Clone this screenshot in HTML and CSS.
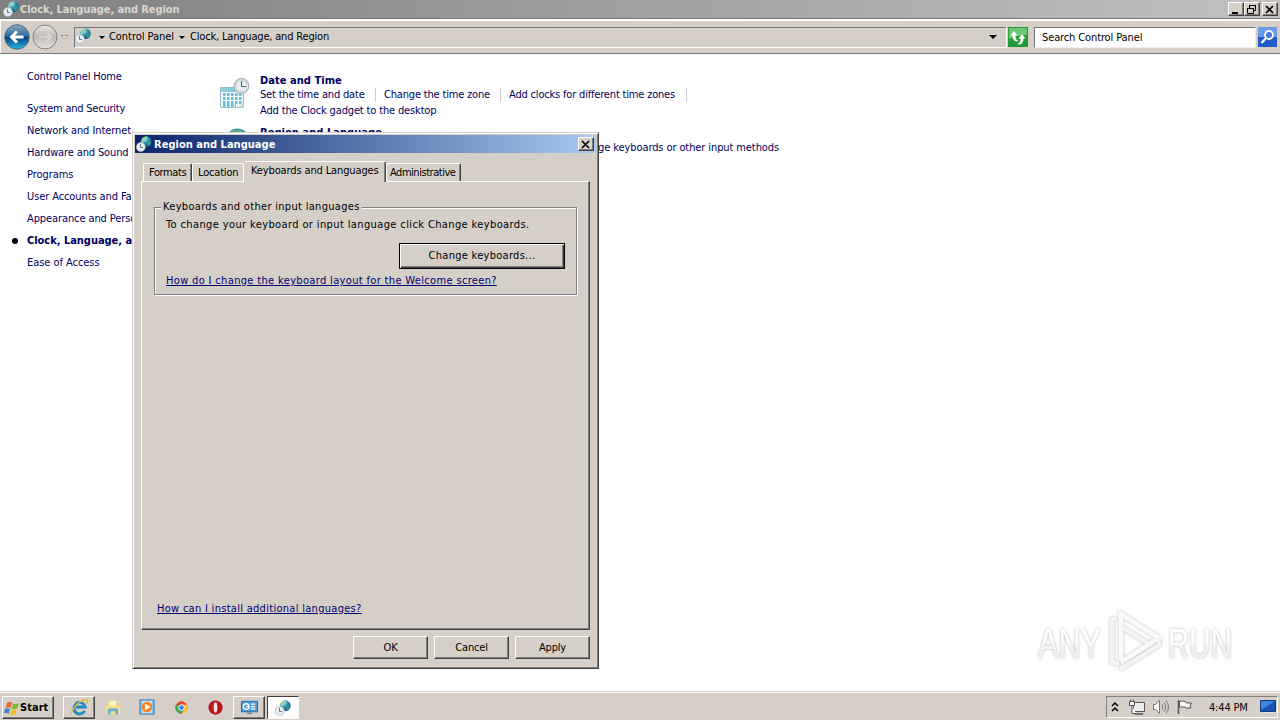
FILE: index.html
```html
<!DOCTYPE html>
<html lang="en">
<head>
<meta charset="utf-8">
<title>Clock, Language, and Region</title>
<link rel="stylesheet" href="styles.css">
</head>
<body>
<svg class="defs" width="0" height="0">
  <defs>
    <radialGradient id="ocean" cx=".35" cy=".25" r=".8"><stop offset="0" stop-color="#c8f4f4"/><stop offset=".4" stop-color="#3a9bc0"/><stop offset="1" stop-color="#07447c"/></radialGradient>
    <linearGradient id="blueOrb" x2="0" y2="1"><stop offset="0" stop-color="#8aa9bd"/><stop offset=".45" stop-color="#2a6ea4"/><stop offset=".52" stop-color="#06437d"/><stop offset="1" stop-color="#28b8ee"/></linearGradient>
    <linearGradient id="grayOrb" x2="0" y2="1"><stop offset="0" stop-color="#e9e7e4"/><stop offset=".5" stop-color="#bdbab6"/><stop offset="1" stop-color="#e6e4e0"/></linearGradient>
    <symbol id="globe" viewBox="0 0 16 16">
      <circle cx="10.300" cy="5.700" r="5.400" fill="url(#ocean)"/>
      <path d="M5.500 3.500Q7.500 0 11 .6L10.500 3 8.500 4 7 7 5.200 6.500z" fill="#8fd6a4"/><path d="M12 5l3 .5-.5 3-2 2-1.500-3z" fill="#2f9a86"/>
      <circle cx="4.800" cy="11" r="4.500" fill="#e9eef2" stroke="#a4b1bc" stroke-width=".7"/>
      <path d="M4.500 8v3.500H7" fill="none" stroke="#53697b" stroke-width=".9"/>
    </symbol>
  </defs>
</svg>
<div class="desktop">
  <header class="titlebar">
    <svg class="ico16" viewBox="0 0 16 16"><use href="#globe"/></svg>
    <span class="caption">Clock, Language, and Region</span>
    <div class="winbtns">
      <button class="wb"><svg viewBox="0 0 13 11"><path d="M3 8h6v2H3z"/></svg></button>
      <button class="wb"><svg viewBox="0 0 13 11"><path d="M4.500 4V1.500h6v5H8.500M4 1.500h7M2.500 4.500h6v5h-6zM2 4.500h7" fill="none" stroke="#000"/></svg></button>
      <button class="wb gap"><svg viewBox="0 0 13 11"><path d="M3 2l7 7M10 2L3 9" stroke="#000" stroke-width="1.700"/></svg></button>
    </div>
  </header>
  <nav class="toolbar">
    <svg class="orbs" viewBox="0 0 68 30">
      <circle cx="14" cy="15" r="12.300" fill="url(#blueOrb)" stroke="#576c7b"/>
      <path d="M20.500 15H9M14 9.500L8.500 15l5.500 5.500" fill="none" stroke="#fff" stroke-width="3"/>
      <circle cx="42" cy="15" r="12" fill="url(#grayOrb)" stroke="#85827e"/>
      <path d="M36 15h12M43.500 10.500L48 15l-4.500 4.500" fill="none" stroke="#d8d5d1" stroke-width="2"/>
      <path d="M58 13.500h7L61.500 17z" fill="#eee" stroke="#858079" stroke-width=".8"/>
    </svg>
    <div class="address">
      <svg class="ico16" viewBox="0 0 16 16"><use href="#globe"/></svg>
      <i class="arrow a1"></i><span class="crumb c1">Control Panel</span>
      <i class="arrow a2"></i><span class="crumb c2">Clock, Language, and Region</span>
      <i class="arrow big"></i>
    </div>
    <svg class="refresh" viewBox="0 0 20 20"><path d="M0 0h20v20H0z" fill="#25983a"/><path d="M1 1h18v7Q10 8 1 12z" fill="#6bc676"/><path d="M2.500 10.500L6 15l3.500-4.500H7.500C7.500 7 8.500 5.500 11 5 7 3.500 4.500 6 4.500 10.500z" transform="matrix(1 0 0 -1 0 19)" fill="#fff"/><path d="M17.500 9.500L14 5l-3.500 4.500h2c0 3.500-1 5-3.500 5.500 4 1.500 6.500-1 6.500-5.500z" transform="translate(0 2)" fill="#fff"/></svg>
    <div class="search">Search Control Panel</div>
    <svg class="mag" viewBox="0 0 19 20"><path d="M0 0h19v20H0z" fill="#245bc9"/><path d="M0 0h19v10H0z" fill="#6d9be9"/><circle cx="11" cy="8" r="4" fill="#467bdc" stroke="#fff" stroke-width="1.800"/><path d="M8 11l-4.500 5" stroke="#fff" stroke-width="2.200"/></svg>
  </nav>
  <main class="content">
    <aside class="side">
      <a class="s1">Control Panel Home</a>
      <ul>
        <li class="s2">System and Security</li><li class="s3">Network and Internet</li><li class="s4">Hardware and Sound</li><li class="s8">Programs</li><li class="s5">User Accounts and Family Safety</li><li class="s6">Appearance and Personalization</li><li class="cur">Clock, Language, and Region</li><li class="s7">Ease of Access</li>
      </ul>
    </aside>
    <section class="groups">
      <div class="group">
        <svg class="ico32" viewBox="0 0 32 32">
          <path d="M1.500 9.500h23v20h-23z" fill="#f2fafc" stroke="#8dbdcc"/><path d="M2 10h22v4H2z" fill="#8acce2"/>
          <path d="M4 16.500h19M4 20.500h19M4 24.500h19M4 27.500h13" stroke="#5ab0d0" stroke-width="2.300" stroke-dasharray="2.600 1.400"/>
          <path d="M19 29.500l5.500-5v5z" fill="#c8dfe5"/>
          <circle cx="22.500" cy="8" r="7.300" fill="#e8edef" stroke="#a5afb5" stroke-width="1.200"/><circle cx="22.500" cy="8" r="5.500" fill="none" stroke="#c3cdd1" stroke-width=".8"/><path d="M22.500 3v5.500h4.500" fill="none" stroke="#5b6b75" stroke-width="1.100"/>
        </svg>
        <div class="tasks">
          <h2 class="h1">Date and Time</h2>
          <p><a class="t1">Set the time and date</a><a class="t2">Change the time zone</a><a class="t3">Add clocks for different time zones</a></p>
          <p class="row2"><span class="t4">Add the Clock gadget to the desktop</span></p>
        </div>
      </div>
      <div class="group second">
        <svg class="ico32" viewBox="0 0 32 32"><circle cx="18.500" cy="12" r="11.500" fill="#3a93ac"/><path d="M10 5Q17-1 24 3l-5 5-7 1z" fill="#5fae80"/></svg>
        <div class="tasks">
          <h2 class="h2">Region and Language</h2>
          <p class="right"><span class="t5">Change keyboards or other input methods</span></p>
        </div>
      </div>
    </section>
  </main>
  <svg class="watermark" viewBox="0 0 210 70">
    <defs><filter id="soft" x="-.1" y="-.1" width="1.200" height="1.200"><feDropShadow dx="0" dy="0" stdDeviation="1.600" flood-color="#777" flood-opacity=".55"/></filter><linearGradient id="mark" x2="0" y2="1"><stop offset=".45" stop-color="#fff"/><stop offset=".65" stop-color="#f0f0f0"/></linearGradient></defs>
    <g filter="url(#soft)">
      <g class="marktext" fill="url(#mark)"><text x="8" y="53" textLength="63" lengthAdjust="spacingAndGlyphs">ANY</text><text x="138" y="53" textLength="64" lengthAdjust="spacingAndGlyphs">RUN</text></g>
      <path d="M91 55V9l38 24-38 24" fill="none" stroke="#fafafa" stroke-width="4.500"/><path d="M91 22l27 16M86 14h-4v43l7 2M90 64l39-24v-7" fill="none" stroke="#f4f4f4" stroke-width="4"/>
    </g>
  </svg>
  <section class="dialog">
    <div class="dtitle"><svg class="ico16" viewBox="0 0 16 16"><use href="#globe"/></svg><span>Region and Language</span><button class="wb"><svg viewBox="0 0 13 11"><path d="M3 2l7 7M10 2L3 9" stroke="#000" stroke-width="1.700"/></svg></button></div>
    <div class="tabs"><div class="tab f"><span>Formats</span></div><div class="tab l"><span>Location</span></div><div class="tab on"><span>Keyboards and Languages</span></div><div class="tab ad"><span>Administrative</span></div></div>
    <div class="panel">
      <fieldset>
        <legend><span>Keyboards and other input languages</span></legend>
        <p class="d1">To change your keyboard or input language click Change keyboards.</p>
        <button class="btn default"><span>Change keyboards...</span></button>
        <a class="link d2">How do I change the keyboard layout for the Welcome screen?</a>
      </fieldset>
      <a class="link d3">How can I install additional languages?</a>
    </div>
    <div class="actions"><button class="btn">OK</button><button class="btn">Cancel</button><button class="btn">Apply</button></div>
  </section>
  <footer class="taskbar">
    <button class="start"><svg viewBox="0 0 17 16"><path d="M4 3q3-2 5 0L7.500 8q-2-1.500-5 0z" fill="#ed6634"/><path d="M10 3.500q3 1.500 6-.5L14.500 8q-3 2-6 .5z" fill="#79b83a"/><path d="M2 9q3-1.500 5 0L5.700 14Q3 12 .5 13.500z" fill="#3e85c8"/><path d="M8 9.500q3 1.500 6-.5l-1.500 5q-3 2-6 .5z" fill="#f4bd2f"/></svg><span>Start</span></button>
    <div class="apps">
      <div class="app raised"><svg viewBox="0 0 20 20"><path d="M15.500 13.500A6 6 0 1 1 16 9.500H6" fill="none" stroke="#238ac9" stroke-width="3"/><path d="M2 17C-1 14 12 0 18 2c2 1-1 4-1 4" fill="none" stroke="#e8b83a" stroke-width="1.500"/></svg></div>
      <div class="app"><svg viewBox="0 0 20 20"><path d="M3 4h6l1 2h6v11H3z" fill="#efcf65"/><path d="M5 3h8v6H5z" fill="#f8f2c2"/><path d="M2 8h15v9H2z" fill="#f5df8b"/><path d="M4 17v-4q0-2 2-2h7q2 0 2 2v4h-3v-3H7v3z" fill="#67aed5"/></svg></div>
      <div class="app"><svg viewBox="0 0 20 20"><path d="M2 2h15v15H2z" fill="#75b6e6" stroke="#3d83bd"/><path d="M4 3h11v13H4z" fill="#c9e4f5"/><circle cx="9.500" cy="9.500" r="5.500" fill="#f1841d"/><path d="M7.500 6l6 3.500-6 3.500z" fill="#fff"/></svg></div>
      <div class="app"><svg viewBox="0 0 20 20"><circle cx="10" cy="10" r="6.500" fill="#e34335"/><path d="M10 10L4.400 6.700A6.500 6.500 0 0 0 10 16.500l3-5z" fill="#3ba854"/><path d="M10 7h5.800A6.500 6.500 0 0 1 10 16.500l3-5z" fill="#fac52c"/><circle cx="10" cy="10" r="3" fill="#4384df" stroke="#fff"/></svg></div>
      <div class="app"><svg viewBox="0 0 20 20"><circle cx="10" cy="10" r="7.500" fill="#b9131b"/><ellipse cx="10" cy="10" rx="2" ry="5.500" fill="#f5dedc"/></svg></div>
      <div class="app raised"><svg viewBox="0 0 20 20"><path d="M1.500 3.500h17v11h-17z" fill="#4e9bd3" stroke="#246b9e"/><circle cx="6.500" cy="9" r="3" fill="none" stroke="#fff" stroke-width="1.500"/><path d="M6.500 9h3M11.500 6.500H16M11.500 9H16M11.500 11.500H16" stroke="#fff" stroke-width="1.300"/><path d="M7 15h6v2H7z" fill="#7197b0"/></svg></div>
      <div class="app active"><svg viewBox="0 0 16 16"><use href="#globe"/></svg></div>
    </div>
    <div class="tray">
      <svg class="trayicons" viewBox="0 0 90 20">
        <path d="M5 9l3-3 3 3M5 14l3-3 3 3" fill="none" stroke="#000" stroke-width="1.500"/>
        <g stroke="#555" fill="#eee"><path d="M26.500 5.500h11v9h-11z"/><path d="M28 17h8" stroke-width="1.500"/><path d="M22.500 4.500h5v4h-5zM25 8.500v8h4M23.500 2.500v2m3-2v2" fill="#fff"/></g>
        <g stroke="#777" fill="#f7f7f7"><path d="M46.500 7.500h2l4-4v13l-4-4h-2z"/><path d="M55 7.500q2 2.500 0 5M57 5.500q3.500 4.500 0 9M59 3.500q5 6.500 0 13" fill="none"/></g>
        <g stroke="#555"><path d="M71.500 3v14" stroke-width="1.500"/><path d="M72.500 4.500q3-1 6 0l1 1.500h5l-1.500 3 1 2h-5l-1-1h-5.500z" fill="#f5f5f5"/></g>
      </svg>
      <span class="clock">4:44 PM</span>
      <svg class="show" viewBox="0 0 16 14"><path d="M.5.500h15v11H.5z" fill="#1752b5" stroke="#123b73"/><path d="M1 1h14L1 10z" fill="#3d86dc"/><path d="M3 12.500h10" stroke="#dfe7f0"/></svg>
    </div>
  </footer>
</div>
</body>
</html>
```
FILE: styles.css
```css
* { box-sizing: border-box; }
body { margin: 0; font: 11px/14px "DejaVu Sans Condensed", "DejaVu Sans", sans-serif; letter-spacing: -.18px; color: #000; overflow: hidden; }
button { font: inherit; letter-spacing: inherit; color: #000; padding: 0; margin: 0; }
p, h2, ul { margin: 0; padding: 0; list-style: none; }
span, a, li { white-space: nowrap; }
svg { display: block; flex: none; }
.defs { position: absolute; }
.desktop { width: 1280px; height: 720px; display: flex; flex-direction: column; background: #fff; position: relative; overflow: hidden; }
.ico16 { width: 16px; height: 16px; }
.titlebar { height: 18px; display: flex; align-items: center; background: linear-gradient(90deg, #808080, #c1c1c1); padding: 0 2px 0 3px; flex: none; }
.caption { color: #d9d5ce; font-weight: bold; padding: 1px 0 0 1px; letter-spacing: -.09px; }
.winbtns { margin-left: auto; display: flex; }
.wb { width: 16px; height: 14px; background: #d6cfc8; border: 1px solid; border-color: #fff #404040 #404040 #fff; box-shadow: inset -1px -1px #808080; }
.wb svg { width: 13px; height: 11px; }
.wb.gap { margin-left: 2px; }
.toolbar { height: 36px; flex: none; display: flex; align-items: center; background: #d6cfc8; border-top: 1px solid #777; border-bottom: 1px solid #777; box-shadow: inset 1px 2px #fff; padding: 2px 1px 0 3px; }
.orbs { width: 68px; height: 30px; }
.address { width: 933px; height: 21px; margin-left: 3px; border: 1px solid #fff; border-top-color: #777; border-left-color: #777; display: flex; align-items: center; }
.address .ico16 { margin-bottom: 3px; }
.arrow { border: 3px solid transparent; border-top-color: #000; border-bottom: 0; }
.a1 { margin-left: 8px; }
.c1 { margin-left: 4px; width: 65px; letter-spacing: -.05px; }
.a2 { margin-left: 5px; }
.c2 { margin-left: 5px; }
.arrow.big { border-width: 4px 4px 0; margin-left: auto; margin-right: 9px; }
.refresh { width: 20px; height: 20px; margin-left: 1px; }
.search { width: 222px; height: 21px; margin: 0 1px 0 6px; background: #fff; border: 1px solid #777; border-right-color: #eee; border-bottom-color: #eee; padding: 3px 7px; letter-spacing: -.12px; }
.mag { width: 19px; height: 20px; margin-left: 1px; }
.content { flex: 1; display: flex; color: #000060; }
.side { width: 220px; padding: 16px 0 0 27px; }
.side ul { padding-top: 18px; }
.side li { height: 22px; }
.s2 { letter-spacing: -.23px; } .s3 { letter-spacing: -.07px; } .s4 { letter-spacing: -.13px; }
.s5, .s6 { letter-spacing: -.1px; } .s7, .s8 { letter-spacing: -.05px; }
.side .cur { font-weight: bold; position: relative; letter-spacing: -.03px; }
.cur::before { content: ""; position: absolute; left: -15px; top: 4px; width: 6px; height: 6px; border-radius: 50%; background: #000; }
.groups { padding-top: 20px; }
.group { display: flex; height: 52px; }
.ico32 { width: 32px; height: 32px; margin: 4px 8px 0 -1px; }
.second .ico32 { margin-top: 2px; }
.tasks { padding-left: 1px; }
h2 { font-size: 11px; line-height: 14px; letter-spacing: .05px; }
.tasks p { height: 16px; display: flex; }
.tasks p a { border-right: 1px solid #ccc; padding-right: 11px; margin-right: 8px; height: 14px; }
.t1 { width: 116px; } .t2 { width: 117px; } .t3 { width: 178px; } .t4 { letter-spacing: -.15px; }
.right { width: 519px; justify-content: flex-end; padding-top: 1px; }
.t5 { letter-spacing: -.1px; }
.watermark { position: absolute; left: 1030px; top: 605px; width: 210px; height: 70px; overflow: visible; }
.marktext { font: 43px "Liberation Sans", sans-serif; letter-spacing: 0; }
.dialog { position: absolute; left: 132px; top: 132px; width: 467px; height: 537px; background: #d6cfc8; border: 1px solid; border-color: #d6cfc8 #404040 #404040 #d6cfc8; box-shadow: inset 1px 1px #fff, inset -1px -1px #808080; padding: 2px; }
.dtitle { height: 18px; display: flex; align-items: center; background: linear-gradient(90deg, #0a246a, #a6caf0); color: #fff; font-weight: bold; padding: 0 2px 0 1px; }
.dtitle span { padding: 1px 0 0 2px; letter-spacing: .02px; }
.dtitle .wb { margin-left: auto; }
.tabs { height: 28px; padding: 8px 0 0 8px; display: flex; align-items: flex-end; }
.tab { height: 18px; border: 1px solid #fff; border-right-color: #404040; border-bottom: 0; box-shadow: inset -1px 0 #808080; padding: 2px 0 0 5px; border-radius: 2px 2px 0 0; }
.f { width: 49px; letter-spacing: -.4px; } .l { width: 52px; border-right-color: #fff; box-shadow: none; } .ad { width: 75px; padding-left: 3px; letter-spacing: -.47px; }
.tab.on { width: 142px; height: 21px; padding: 2px 0 0 6px; margin-bottom: -1px; background: #d6cfc8; position: relative; border-left-color: #d6cfc8; letter-spacing: -.13px; }
.panel { height: 449px; width: 449px; margin-left: 6px; border: 1px solid; border-color: #fff #404040 #404040 #fff; box-shadow: inset -1px -1px #808080; padding: 18px 12px 13px; display: flex; flex-direction: column; }
fieldset { margin: 0; height: 95px; width: 423px; border: 1px solid #808080; box-shadow: 1px 1px #fff, inset 1px 1px #fff; padding: 4px 11px; display: flex; flex-direction: column; }
legend { padding: 0 2px; margin-left: -5px; height: 14px; background: #d6cfc8; letter-spacing: .31px; }
.btn { width: 75px; height: 23px; background: #d6cfc8; border: 1px solid; border-color: #fff #404040 #404040 #fff; box-shadow: inset -1px -1px #808080; }
.btn.default { width: 166px; height: 26px; align-self: flex-end; margin: 11px 0 5px; border-color: #000; box-shadow: inset 1px 1px #fff, inset -1px -1px #404040, inset -2px -2px #808080; letter-spacing: .28px; }
.link { color: #000070; text-decoration: underline; }
.d1 { white-space: nowrap; letter-spacing: .38px; }
.d2 { letter-spacing: .34px; }
.d3 { margin-top: auto; padding-left: 3px; letter-spacing: .29px; }
.actions { display: flex; justify-content: flex-end; gap: 6px; padding: 6px 6px 0; }
.taskbar { height: 28px; flex: none; background: #d6cfc8; box-shadow: 0 -1px #d6cfc8, inset 0 1px #fff; display: flex; padding: 4px 2px 1px; }
.start { width: 52px; height: 23px; border: 1px solid; border-color: #fff #404040 #404040 #fff; box-shadow: inset -1px -1px #808080; background: #d6cfc8; font-weight: bold; display: flex; align-items: center; letter-spacing: .05px; }
.start svg { width: 17px; height: 16px; }
.apps { display: flex; margin-left: 9px; gap: 2px; }
.app { width: 32px; height: 23px; display: flex; align-items: center; justify-content: center; }
.app svg { width: 19px; height: 19px; }
.raised { border: 1px solid; border-color: #fff #404040 #404040 #fff; box-shadow: inset -1px -1px #808080; }
.active { border: 1px solid; border-color: #404040 #fff #fff #404040; background: #fff; }
.active svg { width: 16px; height: 16px; }
.tray { margin-left: auto; width: 172px; height: 22px; border: 1px solid; border-color: #808080 #fff #fff #808080; display: flex; align-items: center; }
.trayicons { width: 90px; height: 20px; }
.clock { margin-left: 12px; width: 42px; padding-top: 1px; }
.show { width: 16px; height: 14px; margin-left: 9px; }
```
